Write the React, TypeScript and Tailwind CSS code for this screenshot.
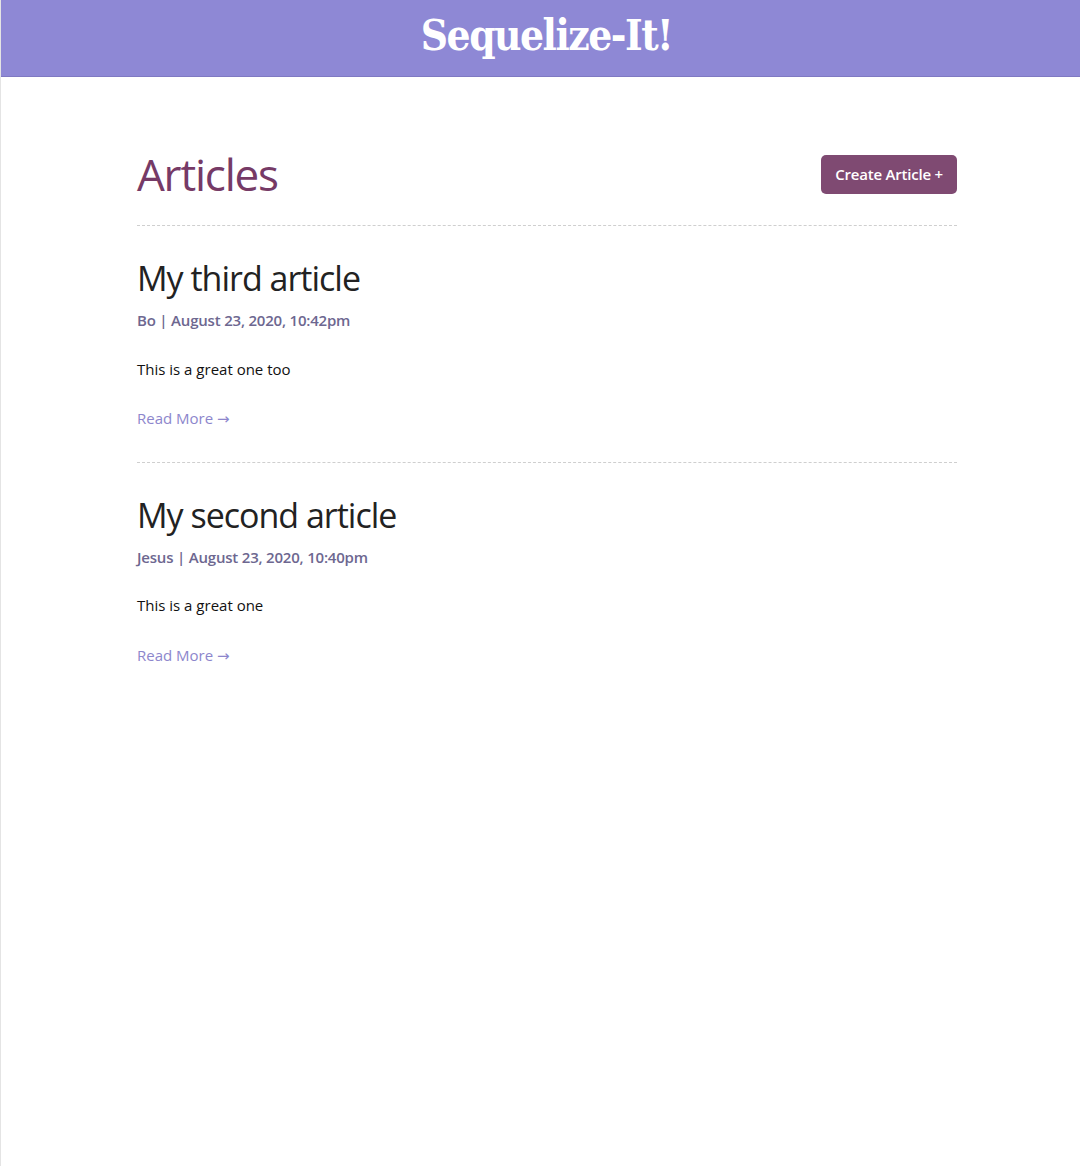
import React from "react";

const articles = [
  { title: "My third article", author: "Bo", date: "August 23, 2020, 10:42pm", body: "This is a great one too" },
  { title: "My second article", author: "Jesus", date: "August 23, 2020, 10:40pm", body: "This is a great one" },
];

export default function App() {
  return (
    <div className="min-h-[1166px] bg-white border-l border-[#e4e4e4]" style={{ fontFamily: '"Open Sans", sans-serif' }}>
      <header className="h-[77px] bg-[#8e88d5] border-b border-[#7f79c2] flex items-center justify-center pl-[12px]">
        <h1
          className="text-white text-[42px] font-bold leading-none tracking-[-1.5px] pb-[5px]"
          style={{ fontFamily: '"DejaVu Serif Condensed", "DejaVu Serif", serif' }}
        >
          Sequelize-It!
        </h1>
      </header>
      <main className="ml-[136px] w-[820px] pt-[73px]">
        <div className="flex items-center justify-between h-[48px]">
          <h2 className="text-[44px] leading-none text-[#763a66] tracking-[-1.2px]">Articles</h2>
          <button className="h-[39px] px-[14px] rounded-[5px] bg-[#7f4a72] text-white text-[15px] font-semibold tracking-[-0.2px]">
            Create Article +
          </button>
        </div>
        <div className="mt-[27px] border-t border-dashed border-[#cfcfcf]" />
        {articles.map((a, i) => (
          <article
            key={i}
            className={
              i === articles.length - 1
                ? "pt-[35px] pb-[31px]"
                : "pt-[35px] pb-[31px] border-b border-dashed border-[#cfcfcf]"
            }
          >
            <h3 className="text-[34px] leading-none text-[#222] tracking-[-1px]">{a.title}</h3>
            <p className="mt-[14px] text-[15px] font-semibold text-[#6d6790] tracking-[-0.2px]">
              {a.author} | {a.date}
            </p>
            <p className="mt-[26px] text-[15px] text-[#111]">{a.body}</p>
            <a href="#" className="block mt-[27px] text-[15px] text-[#8d86cc]">
              Read More{" "}
              <span className="text-[15px]" style={{ fontFamily: '"DejaVu Sans", sans-serif' }}>
                →
              </span>
            </a>
          </article>
        ))}
      </main>
    </div>
  );
}
